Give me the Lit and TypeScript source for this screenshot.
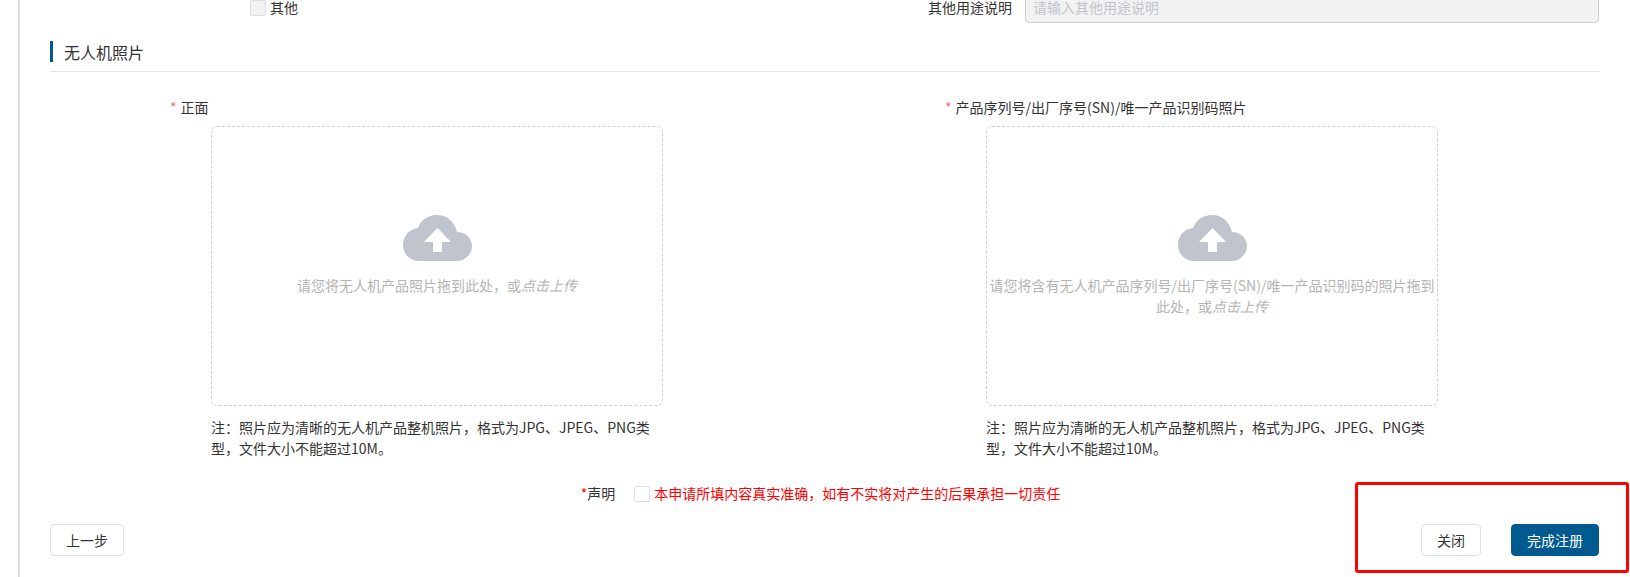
import { LitElement, html, css, svg } from "lit";
import { customElement } from "lit/decorators.js";

const cloud = svg`<path fill="#c0c4cc" d="M16 46C7 46 0 39 0 30 0 21 6 14 15 13 18 5 25 0 34 0 44 0 51 6 54 17 62 17 69 23 69 31 69 39 62 46 54 46Z"/><path fill="#fff" d="M34.5 13 48 27H39V37H30V27H21Z"/>`;

@customElement("app-root")
export class AppRoot extends LitElement {
  static styles = css`
    :host {
      display: block;
      position: relative;
      height: 577px;
      overflow: hidden;
      background: #fff;
      font-family: "Noto Sans CJK SC", "Liberation Sans", sans-serif;
      font-size: 14px;
      line-height: 21px;
      color: #333;
    }
    .page {
      margin-left: 18px;
      height: 586px;
      margin-top: -9px;
      border-left: 2px solid #ddd;
      padding: 0 31px 0 30px;
      box-sizing: border-box;
    }
    .top {
      display: grid;
      grid-template-columns: 775px 1fr;
      height: 32px;
    }
    .other {
      display: flex;
      align-items: center;
      gap: 4px;
      padding: 2px 0 0 200px;
    }
    .other span:last-child {
      line-height: 12px;
      margin-bottom: 2px;
    }
    .box {
      display: block;
      width: 16px;
      height: 16px;
      box-sizing: border-box;
      border: 1px solid #dcdfe6;
      border-radius: 2px;
      background: #fff;
      flex: none;
    }
    .box.off {
      background: #f2f2f2;
    }
    .use {
      display: flex;
      align-items: center;
      padding-left: 103px;
      gap: 13px;
    }
    .use span {
      line-height: 12px;
    }
    .use input {
      flex: 1;
      min-width: 0;
      height: 32px;
      box-sizing: border-box;
      padding: 0 7px;
      border: 1px solid #ccc;
      border-radius: 4px;
      background: #f2f2f2;
      font: inherit;
    }
    .use input::placeholder {
      color: #c0c4cc;
      opacity: 1;
    }
    .title {
      margin-top: 18px;
      padding-bottom: 9px;
      border-bottom: 1px solid #e6e6e6;
    }
    .title span {
      display: block;
      border-left: 3px solid #005a8f;
      padding: 2px 0 0 11px;
      font-size: 16px;
      line-height: 19px;
    }
    .uploads {
      display: grid;
      grid-template-columns: 775px 1fr;
      margin-top: 25px;
    }
    .label {
      padding-left: 120px;
      margin-bottom: 8px;
    }
    .star {
      color: #f56c6c;
      margin-right: 4px;
    }
    .drop {
      margin-left: 161px;
      width: 452px;
      height: 280px;
      box-sizing: border-box;
      border: 1px dashed #d0d0d0;
      border-radius: 6px;
      padding-top: 88px;
      text-align: center;
      color: #b4b4b4;
    }
    .drop svg {
      display: block;
      margin: 0 auto 14px;
      width: 69px;
      height: 46px;
    }
    .lead {
      display: block;
    }
    .note {
      margin: 11px 0 0 161px;
      width: 440px;
    }
    .declare {
      display: flex;
      justify-content: center;
      align-items: center;
      margin-top: 24px;
      padding-right: 8px;
    }
    .req {
      color: #f00;
    }
    .declare .box {
      margin: 0 4px 0 19px;
    }
    .warn {
      color: #f00;
    }
    .actions {
      display: flex;
      align-items: center;
      margin-top: 20px;
    }
    button {
      height: 32px;
      box-sizing: border-box;
      border: 1px solid #dcdfe6;
      border-radius: 4px;
      background: #fff;
      color: #333;
      font: inherit;
      padding: 0;
    }
    .prev {
      width: 74px;
      margin-right: auto;
    }
    .close {
      width: 60px;
    }
    .done {
      width: 88px;
      margin-left: 30px;
      background: #005a8f;
      border-color: #005a8f;
      color: #fff;
    }
    .mark {
      position: absolute;
      left: 1355px;
      top: 482px;
      width: 274px;
      height: 91px;
      box-sizing: border-box;
      border: 3px solid #f00;
      border-radius: 3px;
      pointer-events: none;
    }
  `;

  private upload(label: string, lead: string, tail: string) {
    return html`<div>
      <div class="label"><span class="star">*</span>${label}</div>
      <div class="drop">
        <svg viewBox="0 0 69 46">${cloud}</svg>
        ${lead ? html`<span class="lead">${lead}</span>` : ""}
        <span>${tail}</span><em>点击上传</em>
      </div>
      <div class="note">注：照片应为清晰的无人机产品整机照片，格式为JPG、JPEG、PNG类型，文件大小不能超过10M。</div>
    </div>`;
  }

  render() {
    return html`
      <div class="page">
        <div class="top">
          <div class="other"><span class="box off"></span><span>其他</span></div>
          <div class="use">
            <span>其他用途说明</span>
            <input disabled placeholder="请输入其他用途说明" />
          </div>
        </div>
        <div class="title"><span>无人机照片</span></div>
        <div class="uploads">
          ${this.upload("正面", "", "请您将无人机产品照片拖到此处，或")}
          ${this.upload(
            "产品序列号/出厂序号(SN)/唯一产品识别码照片",
            "请您将含有无人机产品序列号/出厂序号(SN)/唯一产品识别码的照片拖到",
            "此处，或"
          )}
        </div>
        <div class="declare">
          <span><span class="req">*</span>声明</span>
          <span class="box"></span>
          <span class="warn">本申请所填内容真实准确，如有不实将对产生的后果承担一切责任</span>
        </div>
        <div class="actions">
          <button class="prev">上一步</button>
          <button class="close">关闭</button>
          <button class="done">完成注册</button>
        </div>
      </div>
      <div class="mark"></div>
    `;
  }
}
